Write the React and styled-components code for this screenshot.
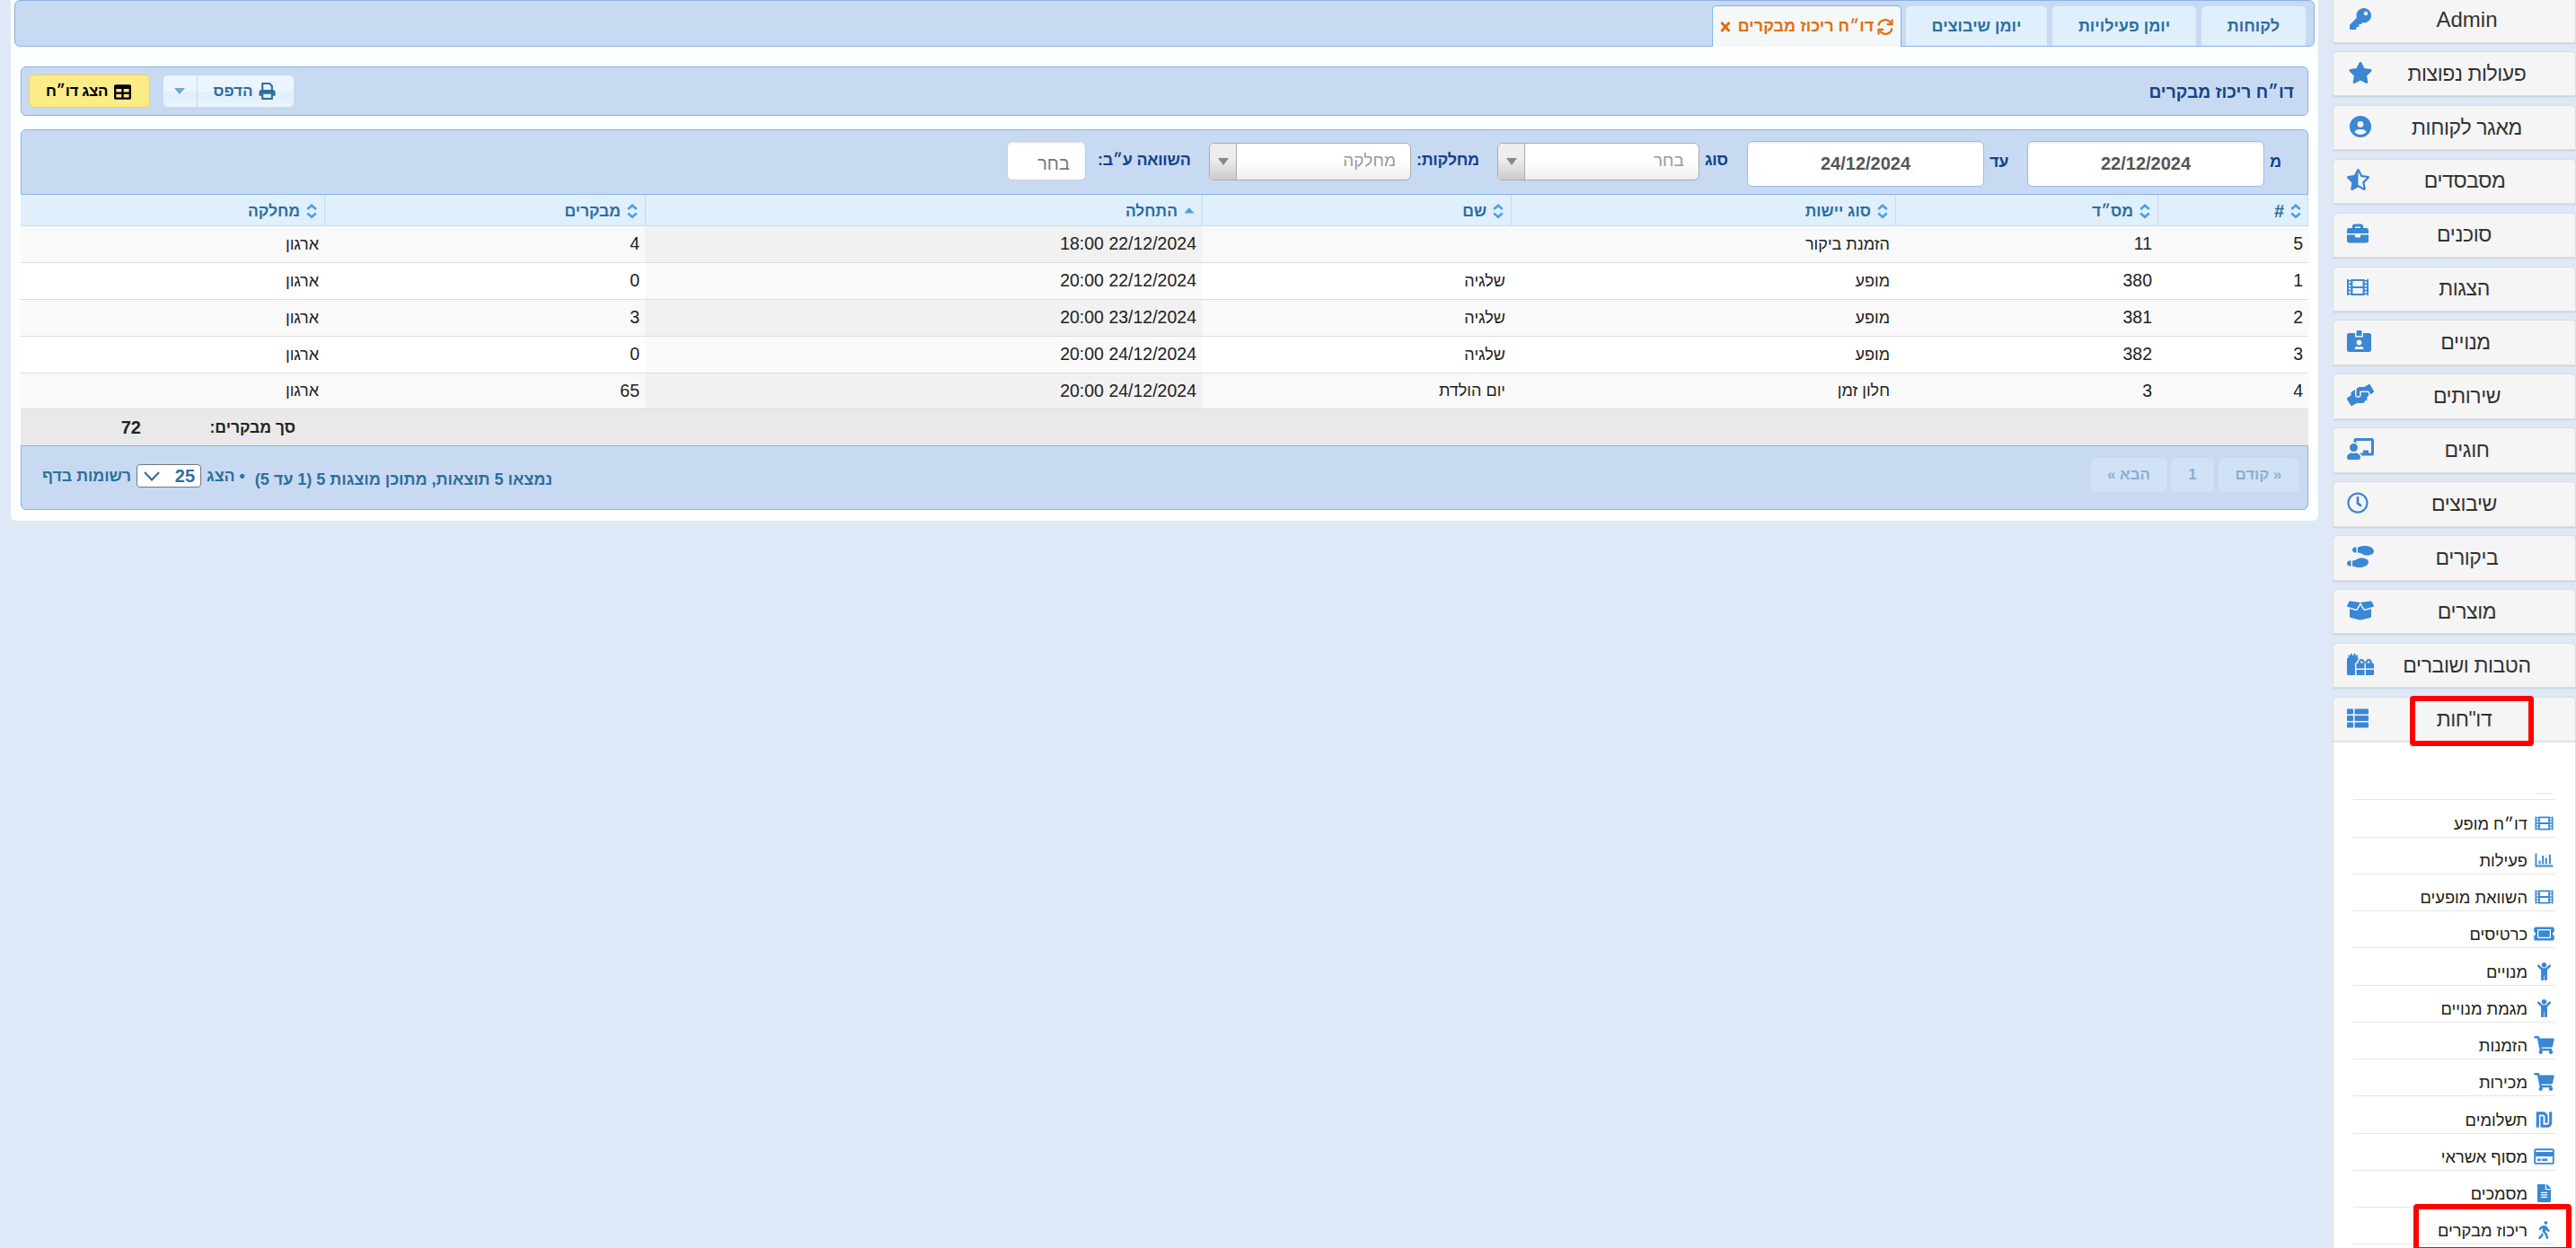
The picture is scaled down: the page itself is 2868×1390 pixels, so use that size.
import styled, { createGlobalStyle, css } from "styled-components";
import {
  FaKey,
  FaStar,
  FaStarHalfAlt,
  FaBriefcase,
  FaIdCardAlt,
  FaHandsHelping,
  FaChalkboardTeacher,
  FaRegClock,
  FaShoePrints,
  FaBoxOpen,
  FaGifts,
  FaThList,
  FaTicketAlt,
  FaChild,
  FaShoppingCart,
  FaShekelSign,
  FaRegCreditCard,
  FaFileAlt,
  FaWalking,
  FaTable,
} from "react-icons/fa";
import { FaCircleUser } from "react-icons/fa6";

const GlobalStyle = createGlobalStyle`
  * {
    box-sizing: border-box;
  }
  body {
    margin: 0;
    background: #dfe8f6;
    font-family: "Liberation Sans", Arial, sans-serif;
    font-size: 20px;
    color: #222;
  }
`;

const Page = styled.div`
  display: flex;
  direction: rtl;
  align-items: flex-start;
  width: 2868px;
  height: 1390px;
  overflow: hidden;
`;

/* ---------- sidebar ---------- */
const Sidebar = styled.aside`
  width: 271px;
  margin-left: 16px;
  flex: none;
  height: 1390px;
  overflow: hidden;
`;
const MenuButton = styled.div`
  display: flex;
  direction: ltr;
  align-items: center;
  position: relative;
  height: 50.5px;
  margin-bottom: 9.42px;
  padding: 0 17px 0 15px;
  background: #f5f5f5;
  border: 1px solid #ddd;
  border-radius: 5px 5px 0 0;
  box-shadow: 0 1px 2px rgba(0, 0, 0, 0.1);
  font-size: 24px;
  color: #333;

  &:first-child {
    margin-top: -3px;
  }
`;
const MenuIcon = styled.span`
  display: flex;
  flex: none;
  justify-content: center;
  width: ${(prop) => prop.$w || 24}px;
  padding-bottom: 3px;
  color: #3a87d4;

  svg {
    flex: none;
    width: 100%;
    height: 24px;
  }
`;
const MenuLabel = styled.span`
  flex: 1;
  text-align: center;
  direction: rtl;
  white-space: nowrap;

  &:lang(he) {
    font-size: 23px;
    letter-spacing: -0.4px;
  }
`;
const SubMenu = styled.ul`
  list-style: none;
  margin: -9.42px 0 0;
  padding: 0 22px;
  height: 620px;
  background: #fff;
  border: 1px solid #ddd;
  border-top: none;
`;
const SubStub = styled.li`
  display: flex;
  align-items: flex-end;
  height: 65px;
  padding: 0 4px 6px;
  border-bottom: 1px solid #e5e5e5;

  &::before {
    content: "";
    width: 17px;
    height: 1px;
    background: #d3e4f0;
  }
`;
const SubItem = styled.li`
  display: flex;
  align-items: flex-end;
  position: relative;
  height: 41.25px;
  padding-bottom: 3px;
  border-bottom: 1px solid #e5e5e5;
  color: #222211;
  font-size: 18.3px;
  white-space: nowrap;
`;
const SubIcon = styled.span`
  display: flex;
  justify-content: center;
  width: 25px;
  margin-left: 6px;
  padding-bottom: 2px;
  color: #3a87d4;

  svg {
    flex: none;
    width: 25px;
    height: 20px;
  }
`;
const Mark = styled.span`
  position: absolute;
  border: 6px solid #ff0000;
  border-radius: 4px;
  ${(prop) =>
    prop.$sub
      ? css`
          right: -18px;
          top: -4px;
          width: 176px;
          height: 54px;
        `
      : css`
          left: 85px;
          top: -2px;
          width: 138px;
          height: 56px;
        `}
`;

/* ---------- main panel ---------- */
const Panel = styled.main`
  width: 2569px;
  height: 580px;
  flex: none;
  background: #fdfefe;
  border-radius: 0 0 6px 6px;
`;
const Tabs = styled.nav`
  display: flex;
  align-items: flex-end;
  gap: 6px;
  height: 52px;
  margin: 0 4px;
  padding-right: 9px;
  background: #c8daf2;
  border: 1px solid #8db2e3;
  border-radius: 6px;
`;
const Tab = styled.div`
  display: flex;
  align-items: center;
  justify-content: center;
  width: ${(prop) => prop.$w}px;
  height: 44px;
  background: #dfeffc;
  border-radius: 5px 5px 0 0;
  color: #2e6e9e;
  font-size: 18px;
  font-weight: bold;
  white-space: nowrap;

  ${(prop) =>
    prop.$active &&
    css`
      height: 46px;
      margin: 0 -1px -1px 0;
      background: #f5f8f9;
      border: 1px solid #79b7e7;
      border-bottom: none;
      color: #e17009;
      gap: 4px;
    `}

  svg {
    flex: none;
  }
`;
const TabClose = styled.span`
  display: flex;
  margin-right: 4px;
`;
const Toolbar = styled.header`
  display: flex;
  align-items: center;
  height: 55px;
  margin: 22px 11px 15px;
  padding: 0 15px 0 8px;
  background: #c8daf2;
  border: 1px solid #8db2e3;
  border-radius: 6px;
`;
const Title = styled.h1`
  margin: 0 0 0 auto;
  padding-top: 3px;
  font-size: 19.2px;
  color: #15428b;
`;
const SplitButton = styled.div`
  display: flex;
  height: 35px;
  margin-left: 15px;
  border-radius: 5px;
  overflow: hidden;
  background: linear-gradient(#ebf5fe 50%, #dfeffc 50%, #eaf4fd);
  color: #2e6e9e;
  font-size: 17px;
  font-weight: bold;
`;
const SplitMain = styled.span`
  display: flex;
  align-items: center;
  justify-content: center;
  gap: 7px;
  width: 108px;
  padding-left: 0;
  padding-right: 2px;
  border-left: 1px solid #c5dbec;
`;
const SplitArrow = styled.span`
  display: flex;
  align-items: center;
  justify-content: center;
  width: 37px;
  padding-right: 2px;
`;
const Caret = styled.span`
  border: ${(prop) => prop.$size}px solid transparent;
  border-top: ${(prop) => prop.$h}px solid ${(prop) => prop.$color};
  border-bottom: none;
`;
const ShowButton = styled.div`
  display: flex;
  align-items: center;
  justify-content: center;
  gap: 7px;
  width: 135px;
  height: 37px;
  padding: 1px 2px 0 0;
  background: #fbec88;
  border: 1px solid #fad42e;
  border-radius: 6px;
  color: #000;
  font-size: 17px;
  font-weight: bold;
  letter-spacing: -0.4px;
  white-space: nowrap;

  svg {
    width: 19px;
    height: 19px;
  }
`;
const Filters = styled.section`
  display: flex;
  align-items: flex-start;
  height: 73px;
  margin: 0 11px;
  padding: 12px 31px 0 0;
  background: #c8daf2;
  border: 1px solid #8db2e3;
  border-radius: 6px 6px 0 0;
`;
const FilterLabel = styled.label`
  display: flex;
  flex: none;
  justify-content: flex-end;
  align-items: center;
  width: ${(prop) => prop.$w}px;
  height: 46px;
  padding-left: ${(prop) => prop.$gap || 6}px;
  padding-bottom: ${(prop) => prop.$up || 0}px;
  font-size: 18px;
  font-weight: bold;
  letter-spacing: -0.3px;
  color: #15428b;
  white-space: nowrap;
`;
const DateInput = styled.div`
  display: flex;
  align-items: center;
  justify-content: center;
  width: 264px;
  height: 51px;
  background: #fff;
  border: 1px solid #9bbbe8;
  border-radius: 6px;
  box-shadow: inset 0 2px 2px rgba(0, 0, 0, 0.06);
  color: #555;
  font-size: 20px;
  font-weight: bold;
`;
const Select = styled.div`
  display: flex;
  justify-content: space-between;
  width: 225px;
  height: 42px;
  margin-top: 2px;
  border: 1px solid #aaa;
  border-radius: 6px;
  overflow: hidden;
  background: linear-gradient(#fff 50%, #eee);
  color: #999;
  font-size: 19px;
`;
const SelectText = styled.span`
  padding: 8px 16px 0 0;
`;
const SelectArrow = styled.span`
  display: flex;
  align-items: center;
  justify-content: center;
  width: 30px;
  background: linear-gradient(#eee 40%, #ccc);
  border-right: 1px solid #aaa;
`;
const TextInput = styled.div`
  display: flex;
  align-items: center;
  width: 88px;
  height: 44px;
  padding: 6px 17px 0 0;
  background: #fff;
  border: 1px solid #ccc;
  border-radius: 6px;
  box-shadow: inset 0 2px 2px rgba(0, 0, 0, 0.07);
  color: #777;
  font-size: 20px;
`;

/* ---------- table ---------- */
const Table = styled.div`
  margin: 0 11px;
`;
const Row = styled.div`
  display: grid;
  grid-template-columns: 168px 292px 428px 344px 620px 357px 338px;
  height: ${(prop) => (prop.$last ? 40 : 41)}px;
  background: ${(prop) => (prop.$odd ? "#f9f9f9" : "#fff")};
  border-bottom: 1px solid #ddd;
`;
const HeadRow = styled(Row)`
  height: 35px;
  background: #dfeffc;
  border-bottom-color: #c5dbec;
  box-shadow: inset -1px 0 #c5dbec;
  color: #2e6e9e;
  font-weight: bold;
`;
const Cell = styled.div`
  display: flex;
  align-items: center;
  padding: ${(prop) => (prop.$text ? "1px" : "0")} 6px 1px 0;
  background: ${(prop) => prop.$sorted && (prop.$odd ? "#f1f1f1" : "#fafafa")};
  font-size: ${(prop) => (prop.$text ? 18 : 19.5)}px;
`;
const HeadCell = styled.div`
  display: flex;
  align-items: center;
  gap: 7px;
  padding: 2px 8px 0 0;
  border-left: 1px solid #c5dbec;
  font-size: 17.5px;

  &:first-child {
    font-size: 20px;
  }
  &:last-child {
    border-left: none;
  }
`;
const TotalRow = styled.div`
  display: flex;
  align-items: center;
  height: 40px;
  padding-right: 2241px;
  background: #e9e9e9;
  font-weight: bold;
  white-space: nowrap;
`;
const TotalLabel = styled.span`
  width: 172px;
  padding-top: 1px;
  font-size: 17.5px;
`;
const Pager = styled.footer`
  display: flex;
  align-items: flex-start;
  gap: 5px;
  height: 72px;
  padding: 13px 10px 0 23px;
  background: #c8daf2;
  border: 1px solid #8db2e3;
  border-radius: 0 0 6px 6px;
  color: #2e6e9e;
  font-size: 18px;
  font-weight: bold;
  white-space: nowrap;
`;
const PageButton = styled.span`
  display: flex;
  align-items: center;
  justify-content: center;
  width: ${(prop) => prop.$w}px;
  height: 38px;
  padding-bottom: 1px;
  background: #dfeffc;
  border-radius: 5px;
  font-size: 17px;
  opacity: 0.4;
`;
const Summary = styled.span`
  margin: 14px auto 0 6px;
`;
const PageSize = styled.div`
  display: flex;
  align-items: center;
  gap: 6px;
  margin-top: 7px;
  height: 26px;
  font-size: 17.8px;
`;
const SizeSelect = styled.span`
  display: flex;
  align-items: center;
  justify-content: space-between;
  width: 72px;
  height: 26px;
  padding: 0 6px 0 7px;
  background: #fff;
  border: 1px solid #767676;
  border-radius: 4px;
  font-size: 20px;
`;

function FilmIcon() {
  return (
    <svg viewBox="0 0 512 512" fill="none" stroke="currentColor">
      <path d="M20 64V448M492 64V448" strokeWidth="40" />
      <path d="M114 86H398V426H114ZM114 256H398" strokeWidth="46" />
      <path
        d="M17 100H106M17 178H106M17 256H106M17 334H106M17 412H106M406 100H495M406 178H495M406 256H495M406 334H495M406 412H495"
        strokeWidth="34"
      />
    </svg>
  );
}

function ChartIcon() {
  return (
    <svg viewBox="0 0 512 512" fill="none" stroke="currentColor">
      <path d="M24 64V422H512" strokeWidth="48" />
      <path d="M130 370V270M222 370V130M314 370V190M420 370V94" strokeWidth="50" />
    </svg>
  );
}

function SyncIcon() {
  return (
    <svg width="18" height="18" viewBox="0 0 18 18" fill="none" stroke="currentColor" strokeWidth="2.2">
      <path d="M1.5 7.5A7.3 7.3 0 0 1 15 4.8M16.5 10.5A7.3 7.3 0 0 1 3 13.2" />
      <path d="M16.5 0.5V6.2H10.8M1.5 17.5V11.8H7.2" />
    </svg>
  );
}

function PrintIcon() {
  return (
    <svg width="19" height="19" viewBox="0 0 18 18" fill="none" stroke="currentColor" strokeWidth="2">
      <path d="M4 8V1H11.5L14 3.5V8M4 12V17H14V12" />
      <path
        d="M0.5 14V10Q0.5 7.5 3 7.5H15Q17.5 7.5 17.5 10V14H14V12H4V14Z"
        fill="currentColor"
        stroke="none"
      />
    </svg>
  );
}

function SortIcon({ asc }) {
  if (asc)
    return (
      <svg width="12" height="16" viewBox="0 0 12 16">
        <path d="M0.5 10.5L6 4L11.5 10.5Z" fill="#4ca1e3" />
      </svg>
    );
  return (
    <svg width="12" height="17" viewBox="0 0 12 17" fill="none" stroke="#4ca1e3" strokeWidth="2.7">
      <path d="M1.2 6L6 1.8L10.8 6M1.2 10.5L6 14.7L10.8 10.5" />
    </svg>
  );
}

const menu = [
  { label: "Admin", icon: <FaKey />, w: 30, lang: "en" },
  { label: "פעולות נפוצות", icon: <FaStar />, w: 30 },
  { label: "מאגר לקוחות", icon: <FaCircleUser />, w: 30 },
  { label: "מסבסדים", icon: <FaStarHalfAlt />, w: 25 },
  { label: "סוכנים", icon: <FaBriefcase /> },
  { label: "הצגות", icon: <FilmIcon /> },
  { label: "מנויים", icon: <FaIdCardAlt />, w: 27 },
  { label: "שירותים", icon: <FaHandsHelping />, w: 30 },
  { label: "חוגים", icon: <FaChalkboardTeacher />, w: 30 },
  { label: "שיבוצים", icon: <FaRegClock /> },
  { label: "ביקורים", icon: <FaShoePrints />, w: 30 },
  { label: "מוצרים", icon: <FaBoxOpen />, w: 30 },
  { label: "הטבות ושוברים", icon: <FaGifts />, w: 30 },
  { label: 'דו"חות', icon: <FaThList />, marked: true },
];

const reports = [
  { label: "דו״ח מופע", icon: <FilmIcon /> },
  { label: "פעילות", icon: <ChartIcon /> },
  { label: "השוואת מופעים", icon: <FilmIcon /> },
  { label: "כרטיסים", icon: <FaTicketAlt /> },
  { label: "מנויים", icon: <FaChild /> },
  { label: "מגמת מנויים", icon: <FaChild /> },
  { label: "הזמנות", icon: <FaShoppingCart /> },
  { label: "מכירות", icon: <FaShoppingCart /> },
  { label: "תשלומים", icon: <FaShekelSign /> },
  { label: "מסוף אשראי", icon: <FaRegCreditCard /> },
  { label: "מסמכים", icon: <FaFileAlt /> },
  { label: "ריכוז מבקרים", icon: <FaWalking />, marked: true },
];

const columns = ["#", "מס״ד", "סוג יישות", "שם", "התחלה", "מבקרים", "מחלקה"];
const SORTED = 4;
const TEXT_COLUMNS = [2, 3, 6];

const rows = [
  ["5", "11", "הזמנת ביקור", "", "22/12/2024 18:00", "4", "ארגון"],
  ["1", "380", "מופע", "שלגיה", "22/12/2024 20:00", "0", "ארגון"],
  ["2", "381", "מופע", "שלגיה", "23/12/2024 20:00", "3", "ארגון"],
  ["3", "382", "מופע", "שלגיה", "24/12/2024 20:00", "0", "ארגון"],
  ["4", "3", "חלון זמן", "יום הולדת", "24/12/2024 20:00", "65", "ארגון"],
];

export default function App() {
  return (
    <>
      <GlobalStyle />
      <Page>
        <Sidebar>
          {menu.map((item) => (
            <MenuButton key={item.label}>
              <MenuIcon $w={item.w}>{item.icon}</MenuIcon>
              <MenuLabel lang={item.lang || "he"}>{item.label}</MenuLabel>
              {item.marked && <Mark />}
            </MenuButton>
          ))}
          <SubMenu>
            <SubStub />
            {reports.map((item) => (
              <SubItem key={item.label}>
                <SubIcon>{item.icon}</SubIcon>
                {item.label}
                {item.marked && <Mark $sub />}
              </SubItem>
            ))}
          </SubMenu>
        </Sidebar>

        <Panel>
          <Tabs>
            <Tab $w={116}>לקוחות</Tab>
            <Tab $w={160}>יומן פעילויות</Tab>
            <Tab $w={157}>יומן שיבוצים</Tab>
            <Tab $w={211} $active>
              <SyncIcon />
              דו״ח ריכוז מבקרים
              <TabClose>
                <svg width="12" height="12" viewBox="0 0 12 12" stroke="currentColor" strokeWidth="3">
                  <path d="M1.5 1L10.5 11M10.5 1L1.5 11" />
                </svg>
              </TabClose>
            </Tab>
          </Tabs>

          <Toolbar>
            <Title>דו״ח ריכוז מבקרים</Title>
            <SplitButton>
              <SplitMain>
                <PrintIcon />
                הדפס
              </SplitMain>
              <SplitArrow>
                <Caret $size={6} $h={7} $color="#6da8d5" />
              </SplitArrow>
            </SplitButton>
            <ShowButton>
              <FaTable />
              הצג דו״ח
            </ShowButton>
          </Toolbar>

          <Filters>
            <FilterLabel $w={17}>מ</FilterLabel>
            <DateInput>22/12/2024</DateInput>
            <FilterLabel $w={48}>עד</FilterLabel>
            <DateInput>24/12/2024</DateInput>
            <FilterLabel $w={53} $up={3}>
              סוג
            </FilterLabel>
            <Select>
              <SelectText>בחר</SelectText>
              <SelectArrow>
                <Caret $size={6} $h={8} $color="#888" />
              </SelectArrow>
            </Select>
            <FilterLabel $w={96} $up={3}>
              מחלקות:
            </FilterLabel>
            <Select>
              <SelectText>מחלקה</SelectText>
              <SelectArrow>
                <Caret $size={6} $h={8} $color="#888" />
              </SelectArrow>
            </Select>
            <FilterLabel $w={137} $up={3} $gap={13}>
              השוואה ע״ב:
            </FilterLabel>
            <TextInput>בחר</TextInput>
          </Filters>

          <Table>
            <HeadRow>
              {columns.map((name, i) => (
                <HeadCell key={name}>
                  <SortIcon asc={i === SORTED} />
                  {name}
                </HeadCell>
              ))}
            </HeadRow>
            {rows.map((row, r) => (
              <Row key={row[0]} $odd={r % 2 === 0} $last={r === rows.length - 1}>
                {row.map((value, i) => (
                  <Cell
                    key={i}
                    $sorted={i === SORTED}
                    $odd={r % 2 === 0}
                    $text={TEXT_COLUMNS.includes(i)}
                  >
                    <bdi dir={i === SORTED ? "rtl" : undefined}>{value}</bdi>
                  </Cell>
                ))}
              </Row>
            ))}
            <TotalRow>
              <TotalLabel>סך מבקרים:</TotalLabel>
              <span>72</span>
            </TotalRow>
            <Pager>
              <PageButton $w={89}>« קודם</PageButton>
              <PageButton $w={48}>1</PageButton>
              <PageButton $w={84}>הבא »</PageButton>
              <Summary>נמצאו 5 תוצאות, מתוכן מוצגות 5 (1 עד 5)</Summary>
              <PageSize>
                <span>• הצג</span>
                <SizeSelect>
                  25
                  <svg width="18" height="11" viewBox="0 0 18 11" fill="none" stroke="currentColor" strokeWidth="2">
                    <path d="M1 1L9 9.5L17 1" />
                  </svg>
                </SizeSelect>
                <span>רשומות בדף</span>
              </PageSize>
            </Pager>
          </Table>
        </Panel>
      </Page>
    </>
  );
}
